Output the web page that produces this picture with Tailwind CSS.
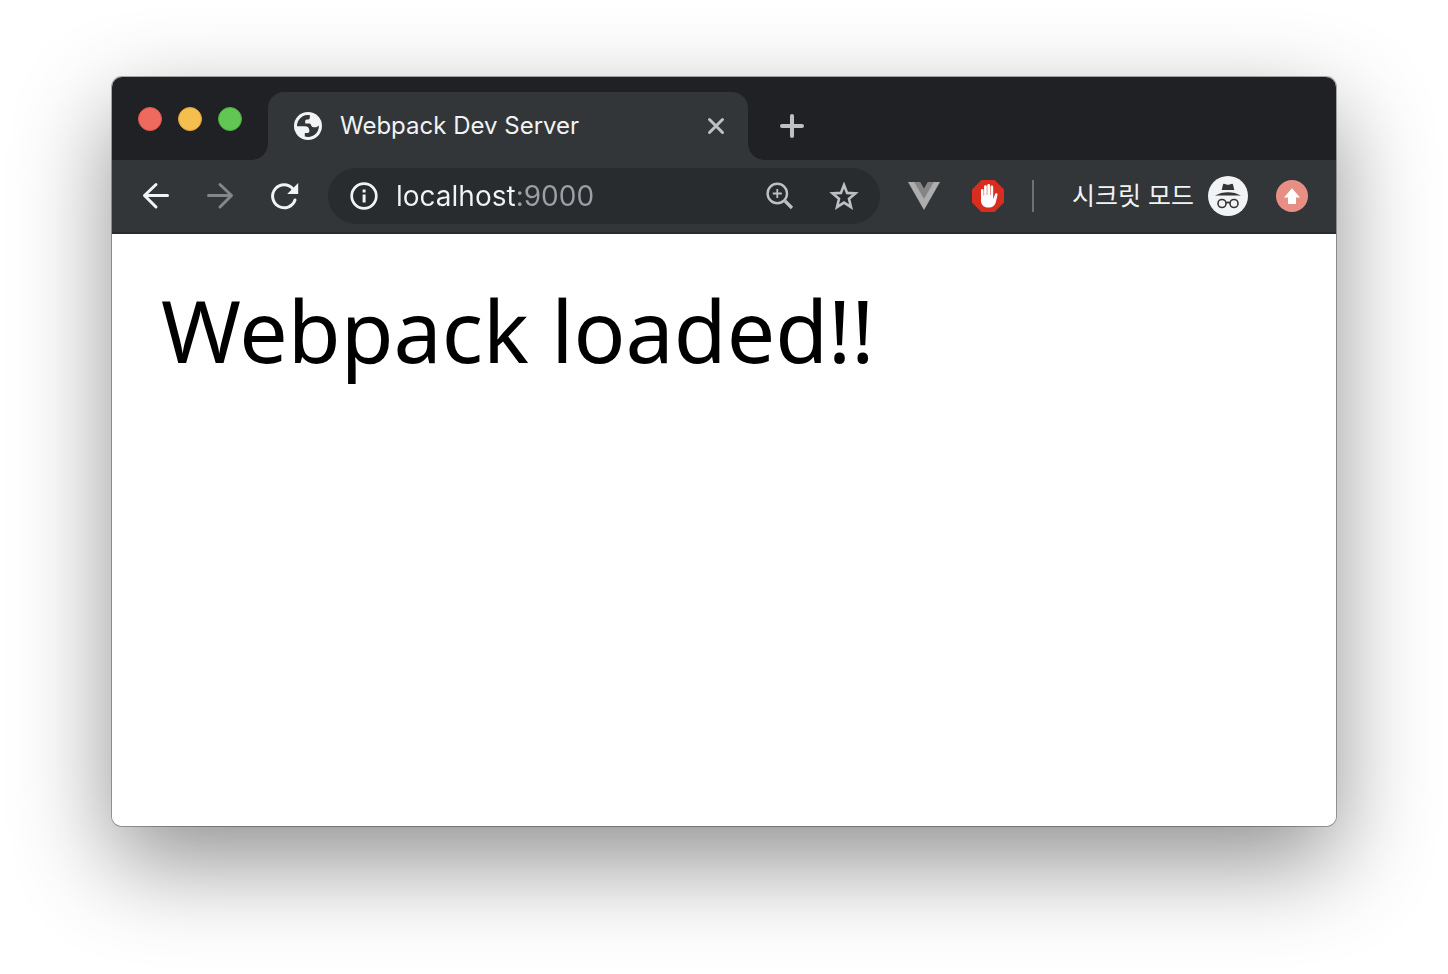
<!DOCTYPE html>
<html lang="ko">
<head>
<meta charset="utf-8">
<meta name="viewport" content="width=device-width, initial-scale=1">
<title>Webpack Dev Server</title>
<script src="https://cdn.jsdelivr.net/npm/@tailwindcss/browser@4"></script>
</head>
<body class="flex min-h-screen flex-col bg-white px-28 pt-[77px] pb-[148px] font-['Inter','Noto_Sans_CJK_KR',sans-serif]">
<div class="flex flex-1 flex-col overflow-hidden rounded-[10px] bg-white shadow-[0_0_0_1px_rgba(0,0,0,0.3),0_36px_96px_rgba(0,0,0,0.44)]">

  <header class="flex bg-[#202124] pt-[15px]">
    <div class="flex h-[54px] items-center gap-4 px-[26px]">
      <button aria-label="Close window" class="size-6 rounded-full border border-[#e1564b] bg-[#ee6a5f]"></button>
      <button aria-label="Minimize window" class="size-6 rounded-full border border-[#dfa33b] bg-[#f5bf4f]"></button>
      <button aria-label="Zoom window" class="size-6 rounded-full border border-[#4cad3d] bg-[#61c654]"></button>
    </div>
    <div class="relative flex h-[68px] w-[480px] items-center rounded-t-2xl bg-[#323639] pr-5 pl-[26px]">
      <span class="absolute bottom-0 -left-4 size-4 bg-[radial-gradient(circle_at_0_0,#202124_15.5px,#323639_16px)]"></span>
      <span class="absolute -right-4 bottom-0 size-4 bg-[radial-gradient(circle_at_100%_0,#202124_15.5px,#323639_16px)]"></span>
      <svg class="size-7" viewBox="0 0 28 28" aria-hidden="true">
        <circle cx="14" cy="14" r="14" fill="#f1f3f4"/>
        <path fill="#323639" d="M3 14.2A11 11 0 0 1 15.8 3.1V6Q15.8 7.400 14.2 7.400H12.600Q11.2 7.600 11.2 9V11.400H15.400Q16.800 11.600 17.2 13.400Q17.800 15 19.600 15.2H22Q23.800 15 24.900 13.600A11 11 0 0 1 10.800 24.600V21H14Q15.600 20.800 15.400 18.600Q15 14.2 11 14.2Z"/>
      </svg>
      <span class="ml-[18px] flex-1 text-[24px] leading-8 whitespace-nowrap text-[#f1f3f4]">Webpack Dev Server</span>
      <button aria-label="Close tab" class="size-6">
        <svg class="size-6" viewBox="0 0 24 24" fill="none" stroke="#bdc1c6" stroke-width="3" stroke-linecap="round"><path d="M5.500 5.500l13 13M18.500 5.500l-13 13"/></svg>
      </button>
    </div>
    <button aria-label="New tab" class="ml-7 h-[68px] w-8">
      <svg class="size-8" viewBox="0 0 32 32" fill="none" stroke="#bdc1c6" stroke-width="4" stroke-linecap="round"><path d="M16 6v20M6 16h20"/></svg>
    </button>
  </header>

  <nav class="flex h-[74px] items-center border-b-2 border-[#292b2e] bg-[#323639] px-7">
    <div class="flex gap-8">
      <button aria-label="Back" class="size-8">
        <svg class="size-8" viewBox="0 0 32 32" fill="none" stroke="#f1f3f4" stroke-width="3" stroke-linecap="round" stroke-linejoin="round"><path d="M27.500 15.500H4.500M16 4.500l-11.500 11L16 27"/></svg>
      </button>
      <button aria-label="Forward" class="size-8" disabled>
        <svg class="size-8" viewBox="0 0 32 32" fill="none" stroke="#848688" stroke-width="3" stroke-linecap="round" stroke-linejoin="round"><path d="M4.500 15.500h23M16 4.500l11.500 11L16 27"/></svg>
      </button>
      <button aria-label="Reload" class="size-8">
        <svg class="size-8" viewBox="0 0 32 32"><path d="M25 9A11.500 11.500 0 1 0 27 20" fill="none" stroke="#f1f3f4" stroke-width="3" stroke-linecap="round"/><path d="M30.200 3v11H19.200z" fill="#f1f3f4"/></svg>
      </button>
    </div>

    <div class="ml-7 flex h-14 min-w-0 flex-1 items-center rounded-full bg-[#282c2f] pr-5 pl-[22px]">
      <svg class="size-7 shrink-0" viewBox="0 0 28 28" aria-hidden="true"><circle cx="14" cy="14" r="12.300" fill="none" stroke="#f1f3f4" stroke-width="2.700"/><path d="M12.600 7.500h3v3h-3zM12.600 12.500h3v8h-3z" fill="#f1f3f4"/></svg>
      <input aria-label="Address" value="localhost:9000" class="ml-[18px] h-10 min-w-0 flex-1 bg-[linear-gradient(90deg,#f1f3f4_120px,#9aa0a6_120px)] bg-clip-text text-[28px] text-transparent outline-none">
      <button aria-label="Zoom page" class="size-8">
        <svg class="size-8" viewBox="0 0 32 32" fill="none" stroke="#bdc1c6"><circle cx="13.300" cy="13.500" r="9.700" stroke-width="2.400"/><path d="M13.300 9v9M8.800 13.500h9" stroke-width="1.800"/><path d="M21 21l7 7" stroke-width="3.200"/></svg>
      </button>
      <button aria-label="Bookmark this page" class="ml-8 size-8">
        <svg class="size-8" viewBox="0 0 32 32" fill="none" stroke="#bdc1c6" stroke-width="2.600"><path d="M16 5l3.100 7.900 8.300.5-6.400 5.400 2 8.300-7-4.500-7 4.500 2-8.300-6.400-5.400 8.300-.5z"/></svg>
      </button>
    </div>

    <button aria-label="Vue devtools" class="ml-7 size-8">
      <svg class="size-8" viewBox="0 0 32 32"><path d="M0 2h32L16 30z" fill="#adadad"/><path d="M6.200 2h19.600L16 19z" fill="#858585"/><path d="M12.200 2h7.600L16 8.600z" fill="#323639"/></svg>
    </button>
    <button aria-label="AdBlock" class="ml-8 size-8">
      <svg class="size-8" viewBox="0 0 32 32"><path d="M9.400 0h13.200L32 9.400v13.200L22.600 32H9.400L0 22.600V9.400z" fill="#d92d20"/><path fill="#fff" d="M9 10.400a1.300 1.300 0 0 1 2.600 0v5.100h.5V6.600a1.350 1.350 0 0 1 2.700 0v8.400h.5V5.300a1.350 1.350 0 0 1 2.700 0V15h.5V6.900a1.350 1.350 0 0 1 2.700 0v11.300l.5.100 1.300-4c.5-1.600 2.900-1.500 2.500.5l-1.500 6.700c-.8 3.900-3.500 6.100-7.500 6.100-5 0-7.500-2.800-7.500-7.600z"/></svg>
    </button>
    <div class="ml-7 h-8 w-[2px] bg-[#6e7173]"></div>
    <span class="ml-[38px] w-[120px] shrink-0 text-[25px] leading-8 whitespace-nowrap text-[#f1f3f4]">시크릿 모드</span>
    <svg class="ml-4 size-10 shrink-0" viewBox="0 0 40 40" aria-hidden="true">
      <circle cx="20" cy="20" r="20" fill="#f1f3f4"/>
      <path fill="#323639" d="M16 7.800q-.8-.2-1 .6L13.700 14h12.600L25 8.400q-.2-.8-1-.6l-2.400.8q-1.600.5-3.200 0zM7 19.600q6-3.400 13-3.400t13 3.400z"/>
      <g fill="none" stroke="#323639" stroke-width="1.600"><circle cx="14" cy="27.500" r="4"/><circle cx="26" cy="27.500" r="4"/><path d="M18 27q2-1.200 4 0"/></g>
    </svg>
    <button aria-label="Update available" class="ml-7 size-8">
      <svg class="size-8" viewBox="0 0 32 32"><circle cx="16" cy="16" r="16" fill="#e88f85"/><path d="M16 8.300l8 9.200h-4V24h-8v-6.500H8z" fill="#fff"/></svg>
    </button>
  </nav>

  <main class="flex-1 bg-white px-[49px] pt-9">
    <h1 class="font-['Noto_Sans',sans-serif] text-[86px] leading-[120px] text-black">Webpack loaded!!</h1>
  </main>
</div>
</body>
</html>
